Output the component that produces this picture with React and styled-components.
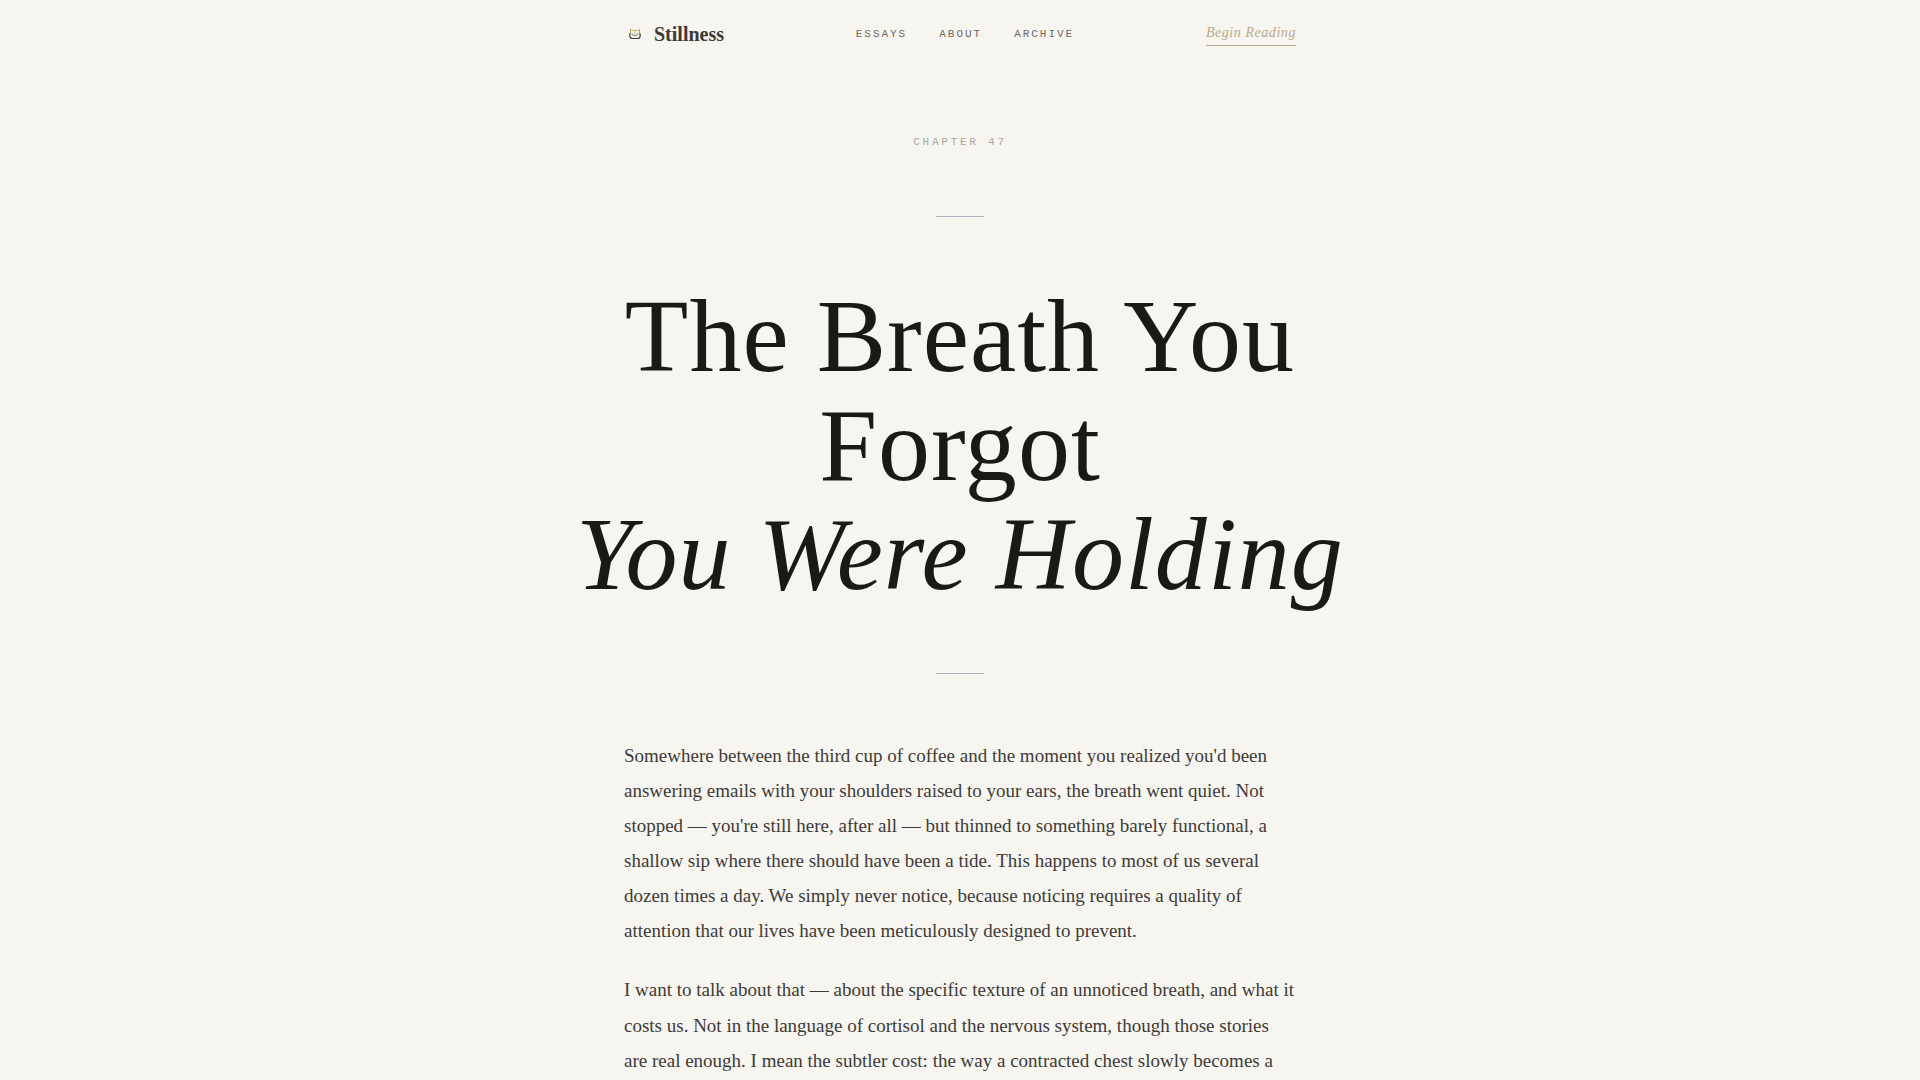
import React from "react";
import styled, { createGlobalStyle } from "styled-components";

const Global = createGlobalStyle`
  * { box-sizing: border-box; }
  body { margin: 0; background: #f7f5f0; color: #3d3b38; font-family: "Liberation Serif", serif; overflow: hidden; }
  #root { height: 100vh; overflow: hidden; }
`;
const Header = styled.header`
  display: flex; align-items: center; justify-content: space-between;
  max-width: 720px; height: 68px; margin: 0 auto; padding: 0 24px;
`;
const Brand = styled.a`
  display: flex; align-items: center; gap: 8px;
  color: #3d3b38; font-size: 20px; font-weight: 700; text-decoration: none;
`;
const Mark = styled.svg`width: 22px; height: 22px;`;
const Nav = styled.nav`display: flex; gap: 32px;`;
const NavLink = styled.a`
  color: #6b6963; font: 11px "Liberation Mono", monospace; letter-spacing: 0.18em;
  text-transform: uppercase; text-decoration: none;
`;
const Begin = styled.a`
  color: #b8a88a; font-size: 14px; line-height: 22px; font-style: italic; letter-spacing: 0.04em;
  text-decoration: none; border-bottom: 1px solid #b8a88a; padding-bottom: 1px;
`;
const Chapter = styled.p`
  margin: 67px 0 0; text-align: center; color: #a8a7a0;
  font: 11px/14px "Liberation Mono", monospace; letter-spacing: 0.25em; text-transform: uppercase;
`;
const Rule = styled.hr`width: 48px; height: 1px; border: 0; margin: 64px auto; background: #b0afc0;`;
const Title = styled.h1`
  max-width: 800px; margin: 0 auto; text-align: center; color: #1a1916;
  font-size: 104px; line-height: 1.05; font-weight: 400; letter-spacing: 0.01em;
`;
const Italic = styled.em`display: block;`;
const Opening = styled.div`padding-top: 3px;`;
const Body = styled.article`max-width: 720px; margin: 0 auto; padding: 0 24px;`;
const Para = styled.p`margin: 0 0 24px; font-size: 19px; line-height: 1.85;`;

function Logo() {
  return (
    <Mark viewBox="0 0 22 22" fill="none" strokeLinecap="round" aria-hidden="true">
      <path d="M6.5 10V6.5L8.5 7.5H13.5L15.5 6.5V10" stroke="#c9a35c" />
      <path d="M11 8V11" stroke="#dfc797" />
      <path d="M6 10.5C5.5 13 6 15.5 8 15.5H14C16 15.5 16.5 13 16 10.5" stroke="#3d3b38" strokeWidth="1.2" />
      <path d="M8 10.5C8 13 10.5 13.5 11 11.5C11.5 13.5 14 13 14 10.5" stroke="#6a6253" strokeWidth="0.8" />
    </Mark>
  );
}

export default function App() {
  return (
    <>
      <Global />
      <Header>
        <Brand href="#"><Logo />Stillness</Brand>
        <Nav>
          <NavLink href="#">Essays</NavLink><NavLink href="#">About</NavLink><NavLink href="#">Archive</NavLink>
        </Nav>
        <Begin href="#">Begin Reading</Begin>
      </Header>
      <main>
        <Chapter>Chapter 47</Chapter>
        <Opening>
          <Rule />
          <Title>The Breath You Forgot<Italic>You Were Holding</Italic></Title>
          <Rule />
        </Opening>
        <Body>
          <Para>Somewhere between the third cup of coffee and the moment you realized you'd been answering emails with your shoulders raised to your ears, the breath went quiet. Not stopped — you're still here, after all — but thinned to something barely functional, a shallow sip where there should have been a tide. This happens to most of us several dozen times a day. We simply never notice, because noticing requires a quality of attention that our lives have been meticulously designed to prevent.</Para>
          <Para>I want to talk about that — about the specific texture of an unnoticed breath, and what it costs us. Not in the language of cortisol and the nervous system, though those stories are real enough. I mean the subtler cost: the way a contracted chest slowly becomes a</Para>
        </Body>
      </main>
    </>
  );
}
